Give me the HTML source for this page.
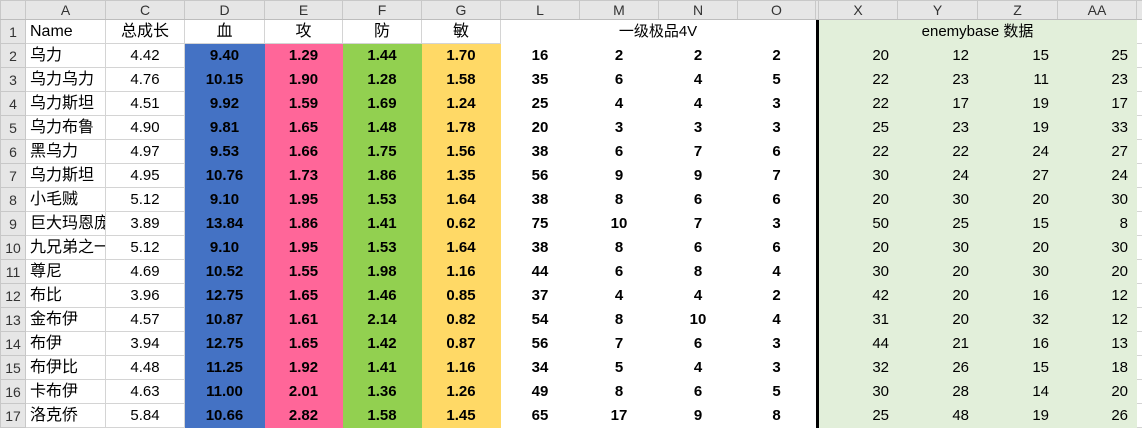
<!DOCTYPE html><html><head><meta charset="utf-8"><style>
body{margin:0;width:1142px;height:424px;overflow:hidden;background:#fff;font-family:"Liberation Sans","Noto Sans CJK SC",sans-serif;}
table{border-collapse:collapse;table-layout:fixed;position:absolute;left:0;top:0;width:1142px}
td{box-sizing:border-box;height:24px;line-height:22px;padding:0;border:1px solid #d4d4d4;font-size:15px;text-align:center;white-space:nowrap;overflow:hidden;color:#000;}
tr.h td{height:19px;line-height:17px;background:#e6e6e6;border-color:#c8c8c8;color:#333;font-size:14px;border-bottom:1px solid #bdbdbd;}
td.r{background:#e6e6e6;border-color:#c8c8c8;color:#333;font-size:14px;}
td.a{text-align:left;padding-left:4px;font-size:16px;}
td.b{background:#4472c4;border-color:#4472c4;font-weight:bold;font-size:15px}
td.p{background:#ff6699;border-color:#ff6699;font-weight:bold;font-size:15px}
td.g{background:#92d050;border-color:#92d050;font-weight:bold;font-size:15px}
td.y{background:#ffd966;border-color:#ffd966;font-weight:bold;font-size:15px}
td.w{border-color:#fff;font-weight:bold;font-size:15px}
td.k{background:#000;border-color:#000}
td.e{background:#e2efda;border-color:#e2efda;text-align:right;padding-right:8px;font-size:15px}
td.f{border-color:#fff #fff #d4d4d4 #fff}
tr.one td.b,tr.one td.p,tr.one td.g,tr.one td.y{background:#fff;border-color:#d4d4d4;font-weight:normal;font-size:16px}
</style></head><body>
<table>
<colgroup><col style="width:25px"><col style="width:80px"><col style="width:79px"><col style="width:80px"><col style="width:78px"><col style="width:79px"><col style="width:79px"><col style="width:79px"><col style="width:79px"><col style="width:79px"><col style="width:78px"><col style="width:3px"><col style="width:79px"><col style="width:80px"><col style="width:80px"><col style="width:79px"><col style="width:6px"></colgroup>
<tr class="h"><td></td><td>A</td><td>C</td><td>D</td><td>E</td><td>F</td><td>G</td><td>L</td><td>M</td><td>N</td><td>O</td><td></td><td>X</td><td>Y</td><td>Z</td><td>AA</td><td></td></tr>
<tr class="one"><td class="r">1</td><td class="a">Name</td><td style="font-size:16px">总成长</td><td class="b">血</td><td class="p">攻</td><td class="g">防</td><td class="y">敏</td><td colspan="4" class="w" style="font-weight:normal;font-size:15px">一级极品4V</td><td class="k"></td><td colspan="4" class="e" style="text-align:center;padding:0">enemybase 数据</td><td class="f"></td></tr>
<tr><td class="r">2</td><td class="a">乌力</td><td>4.42</td><td class="b">9.40</td><td class="p">1.29</td><td class="g">1.44</td><td class="y">1.70</td><td class="w">16</td><td class="w">2</td><td class="w">2</td><td class="w">2</td><td class="k"></td><td class="e">20</td><td class="e">12</td><td class="e">15</td><td class="e">25</td><td class="f"></td></tr>
<tr><td class="r">3</td><td class="a">乌力乌力</td><td>4.76</td><td class="b">10.15</td><td class="p">1.90</td><td class="g">1.28</td><td class="y">1.58</td><td class="w">35</td><td class="w">6</td><td class="w">4</td><td class="w">5</td><td class="k"></td><td class="e">22</td><td class="e">23</td><td class="e">11</td><td class="e">23</td><td class="f"></td></tr>
<tr><td class="r">4</td><td class="a">乌力斯坦</td><td>4.51</td><td class="b">9.92</td><td class="p">1.59</td><td class="g">1.69</td><td class="y">1.24</td><td class="w">25</td><td class="w">4</td><td class="w">4</td><td class="w">3</td><td class="k"></td><td class="e">22</td><td class="e">17</td><td class="e">19</td><td class="e">17</td><td class="f"></td></tr>
<tr><td class="r">5</td><td class="a">乌力布鲁</td><td>4.90</td><td class="b">9.81</td><td class="p">1.65</td><td class="g">1.48</td><td class="y">1.78</td><td class="w">20</td><td class="w">3</td><td class="w">3</td><td class="w">3</td><td class="k"></td><td class="e">25</td><td class="e">23</td><td class="e">19</td><td class="e">33</td><td class="f"></td></tr>
<tr><td class="r">6</td><td class="a">黑乌力</td><td>4.97</td><td class="b">9.53</td><td class="p">1.66</td><td class="g">1.75</td><td class="y">1.56</td><td class="w">38</td><td class="w">6</td><td class="w">7</td><td class="w">6</td><td class="k"></td><td class="e">22</td><td class="e">22</td><td class="e">24</td><td class="e">27</td><td class="f"></td></tr>
<tr><td class="r">7</td><td class="a">乌力斯坦</td><td>4.95</td><td class="b">10.76</td><td class="p">1.73</td><td class="g">1.86</td><td class="y">1.35</td><td class="w">56</td><td class="w">9</td><td class="w">9</td><td class="w">7</td><td class="k"></td><td class="e">30</td><td class="e">24</td><td class="e">27</td><td class="e">24</td><td class="f"></td></tr>
<tr><td class="r">8</td><td class="a">小毛贼</td><td>5.12</td><td class="b">9.10</td><td class="p">1.95</td><td class="g">1.53</td><td class="y">1.64</td><td class="w">38</td><td class="w">8</td><td class="w">6</td><td class="w">6</td><td class="k"></td><td class="e">20</td><td class="e">30</td><td class="e">20</td><td class="e">30</td><td class="f"></td></tr>
<tr><td class="r">9</td><td class="a">巨大玛恩庞</td><td>3.89</td><td class="b">13.84</td><td class="p">1.86</td><td class="g">1.41</td><td class="y">0.62</td><td class="w">75</td><td class="w">10</td><td class="w">7</td><td class="w">3</td><td class="k"></td><td class="e">50</td><td class="e">25</td><td class="e">15</td><td class="e">8</td><td class="f"></td></tr>
<tr><td class="r">10</td><td class="a">九兄弟之一</td><td>5.12</td><td class="b">9.10</td><td class="p">1.95</td><td class="g">1.53</td><td class="y">1.64</td><td class="w">38</td><td class="w">8</td><td class="w">6</td><td class="w">6</td><td class="k"></td><td class="e">20</td><td class="e">30</td><td class="e">20</td><td class="e">30</td><td class="f"></td></tr>
<tr><td class="r">11</td><td class="a">尊尼</td><td>4.69</td><td class="b">10.52</td><td class="p">1.55</td><td class="g">1.98</td><td class="y">1.16</td><td class="w">44</td><td class="w">6</td><td class="w">8</td><td class="w">4</td><td class="k"></td><td class="e">30</td><td class="e">20</td><td class="e">30</td><td class="e">20</td><td class="f"></td></tr>
<tr><td class="r">12</td><td class="a">布比</td><td>3.96</td><td class="b">12.75</td><td class="p">1.65</td><td class="g">1.46</td><td class="y">0.85</td><td class="w">37</td><td class="w">4</td><td class="w">4</td><td class="w">2</td><td class="k"></td><td class="e">42</td><td class="e">20</td><td class="e">16</td><td class="e">12</td><td class="f"></td></tr>
<tr><td class="r">13</td><td class="a">金布伊</td><td>4.57</td><td class="b">10.87</td><td class="p">1.61</td><td class="g">2.14</td><td class="y">0.82</td><td class="w">54</td><td class="w">8</td><td class="w">10</td><td class="w">4</td><td class="k"></td><td class="e">31</td><td class="e">20</td><td class="e">32</td><td class="e">12</td><td class="f"></td></tr>
<tr><td class="r">14</td><td class="a">布伊</td><td>3.94</td><td class="b">12.75</td><td class="p">1.65</td><td class="g">1.42</td><td class="y">0.87</td><td class="w">56</td><td class="w">7</td><td class="w">6</td><td class="w">3</td><td class="k"></td><td class="e">44</td><td class="e">21</td><td class="e">16</td><td class="e">13</td><td class="f"></td></tr>
<tr><td class="r">15</td><td class="a">布伊比</td><td>4.48</td><td class="b">11.25</td><td class="p">1.92</td><td class="g">1.41</td><td class="y">1.16</td><td class="w">34</td><td class="w">5</td><td class="w">4</td><td class="w">3</td><td class="k"></td><td class="e">32</td><td class="e">26</td><td class="e">15</td><td class="e">18</td><td class="f"></td></tr>
<tr><td class="r">16</td><td class="a">卡布伊</td><td>4.63</td><td class="b">11.00</td><td class="p">2.01</td><td class="g">1.36</td><td class="y">1.26</td><td class="w">49</td><td class="w">8</td><td class="w">6</td><td class="w">5</td><td class="k"></td><td class="e">30</td><td class="e">28</td><td class="e">14</td><td class="e">20</td><td class="f"></td></tr>
<tr><td class="r">17</td><td class="a">洛克侨</td><td>5.84</td><td class="b">10.66</td><td class="p">2.82</td><td class="g">1.58</td><td class="y">1.45</td><td class="w">65</td><td class="w">17</td><td class="w">9</td><td class="w">8</td><td class="k"></td><td class="e">25</td><td class="e">48</td><td class="e">19</td><td class="e">26</td><td class="f"></td></tr>
</table>
</body></html>
